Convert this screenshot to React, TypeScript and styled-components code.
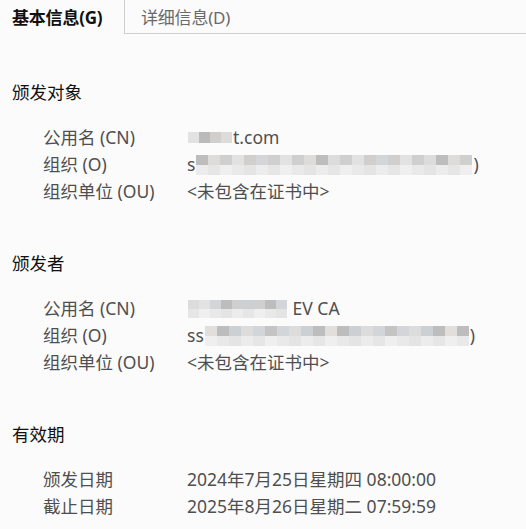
import React from "react";
import styled, { createGlobalStyle } from "styled-components";

const Global = createGlobalStyle`
  html, body { margin: 0; padding: 0; background: #fbfbfb; }
  body { font-family: "Noto Sans", "Noto Sans CJK SC", sans-serif; }
`;

const Page = styled.div`
  width: 526px;
  height: 529px;
  background: #fbfbfb;
  overflow: hidden;
`;

const TabBar = styled.div`
  display: flex;
  height: 34px;
`;

const Tab = styled.div<{ $active?: boolean }>`
  display: flex;
  align-items: center;
  box-sizing: border-box;
  height: 34px;
  padding: 0 16px 1px ${(p) => (p.$active ? "12px" : "16px")};
  width: ${(p) => (p.$active ? "125px" : "auto")};
  font-size: 17px;
  font-weight: ${(p) => (p.$active ? 700 : 400)};
  color: ${(p) => (p.$active ? "#111" : "#6a6a6a")};
  border-right: ${(p) => (p.$active ? "1px solid #cfcfcf" : "none")};
  border-bottom: ${(p) => (p.$active ? "none" : "1px solid #cfcfcf")};
  letter-spacing: -0.2px;
`;

const TabFill = styled.div`
  flex: 1;
  border-bottom: 1px solid #cfcfcf;
`;

const Content = styled.div`
  padding: 45px 0 0 12px;
  display: flex;
  flex-direction: column;
  gap: 45px;
`;

const Section = styled.section`
  display: flex;
  flex-direction: column;
  gap: 18px;
`;

const Heading = styled.div`
  font-size: 17.5px;
  line-height: 27px;
  color: #111;
`;

const Rows = styled.div`
  display: flex;
  flex-direction: column;
  padding-left: 31px;
`;

const Row = styled.div`
  display: grid;
  grid-template-columns: 144px 1fr;
  font-size: 17.5px;
  line-height: 27px;
  color: #4f4f4f;
  white-space: nowrap;
`;

const Value = styled.div`
  display: flex;
  align-items: center;
`;

const MosaicGrid = styled.span<{ $cols: number; $cell: number; $rowH: number }>`
  display: inline-grid;
  grid-template-columns: repeat(${(p) => p.$cols}, ${(p) => p.$cell}px);
  grid-auto-rows: ${(p) => p.$rowH}px;
  margin: 0 1px;
`;

const Cell = styled.span<{ $c: string }>`
  background: ${(p) => p.$c};
`;

const shades = ["#dedcdb", "#d6d4d3", "#cdd0d3", "#e2e2e2", "#dadada", "#c4c4c4", "#bdbdbd", "#d1cfcd", "#c6c8cb", "#dcdcdc", "#cfcfcf", "#bababa", "#e0dfde", "#d3d5d8"];
const lightShades = ["#e9e9e9", "#e4e4e4", "#ececec", "#e6e6e6", "#efefef"];

function Mosaic({ cols, rows, seed, cell = 12, rowH = 10 }: { cols: number; rows: number; seed: number; cell?: number; rowH?: number }) {
  const cells: string[] = [];
  for (let r = 0; r < rows; r++) {
    for (let c = 0; c < cols; c++) {
      const i = (c * 7 + r * 5 + seed * 3 + ((c * c) % 5)) % shades.length;
      const col = r === rows - 1 && rows > 1 ? lightShades[(c + seed) % 5] : shades[i];
      cells.push(col);
    }
  }
  return (
    <MosaicGrid $cols={cols} $cell={cell} $rowH={rowH}>
      {cells.map((c, i) => (
        <Cell key={i} $c={c} />
      ))}
    </MosaicGrid>
  );
}

export default function App() {
  return (
    <Page>
      <Global />
      <TabBar>
        <Tab $active>基本信息(G)</Tab>
        <Tab>详细信息(D)</Tab>
        <TabFill />
      </TabBar>
      <Content>
        <Section>
          <Heading>颁发对象</Heading>
          <Rows>
            <Row>
              <span>公用名 (CN)</span>
              <Value>
                <Mosaic cols={4} rows={1} seed={1} cell={11} rowH={11} />
                t.com
              </Value>
            </Row>
            <Row>
              <span>组织 (O)</span>
              <Value>
                s<Mosaic cols={23} rows={2} seed={2} />)
              </Value>
            </Row>
            <Row>
              <span>组织单位 (OU)</span>
              <Value>&lt;未包含在证书中&gt;</Value>
            </Row>
          </Rows>
        </Section>
        <Section>
          <Heading>颁发者</Heading>
          <Rows>
            <Row>
              <span>公用名 (CN)</span>
              <Value>
                <Mosaic cols={9} rows={2} seed={3} cell={11} rowH={9} />
                &nbsp;EV CA
              </Value>
            </Row>
            <Row>
              <span>组织 (O)</span>
              <Value>
                ss<Mosaic cols={22} rows={2} seed={4} />)
              </Value>
            </Row>
            <Row>
              <span>组织单位 (OU)</span>
              <Value>&lt;未包含在证书中&gt;</Value>
            </Row>
          </Rows>
        </Section>
        <Section>
          <Heading>有效期</Heading>
          <Rows>
            <Row>
              <span>颁发日期</span>
              <Value>2024年7月25日星期四 08:00:00</Value>
            </Row>
            <Row>
              <span>截止日期</span>
              <Value>2025年8月26日星期二 07:59:59</Value>
            </Row>
          </Rows>
        </Section>
      </Content>
    </Page>
  );
}
